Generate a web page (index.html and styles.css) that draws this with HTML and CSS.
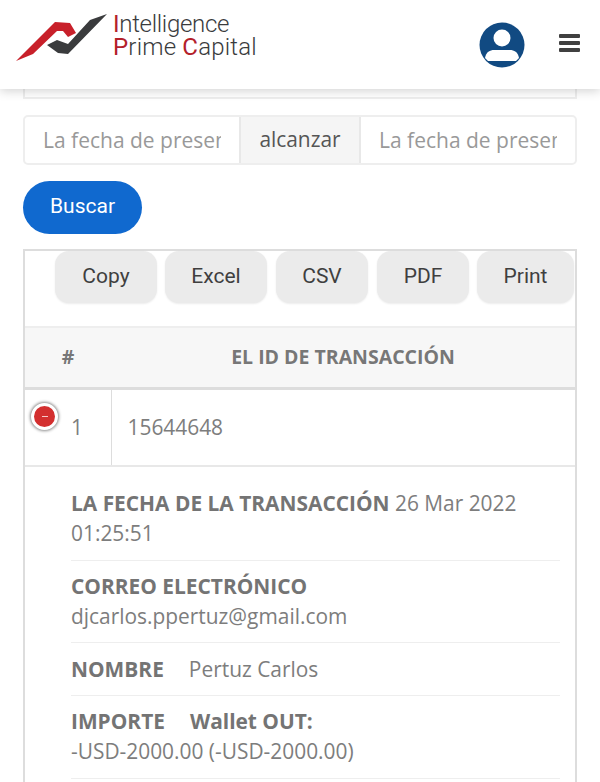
FILE: index.html
```html
<!DOCTYPE html>
<html>
	<head>
		<meta charset="UTF-8">
		<title>Intelligence Prime Capital</title>
		<link rel="stylesheet" href="styles.css">
	</head>
	<body>
		<header class="topbar">
			<a class="logo" href="javascript:;">
				<svg class="logo-mark" width="92" height="48" viewBox="16 14 92 48">
					<polygon fill="#c8202a" points="16,61 55,22 70,23 76,33 68,37 63,31 57,31 33,54"/>
					<polygon fill="#3a3b3d" points="107,14 90,20 68,44 57,40 47,45 58,53 68,54"/>
				</svg>
				<span class="logo-text">
					<span class="line-one"><b>I</b>ntelligence</span>
					<span class="line-two"><b>P</b>rime <b>C</b>apital</span>
				</span>
			</a>
			<svg class="avatar" width="46" height="46" viewBox="0 0 46 46">
				<circle cx="23" cy="23" r="22.5" fill="#114a82"/>
				<circle cx="23" cy="16" r="8.5" fill="#fff"/>
				<path fill="#fff" d="M6 36c1-6 5-8 9-8h16c4 0 8 2 9 8-1 1-2 2-3 3H9c-1-1-2-2-3-3z"/>
			</svg>
			<div class="burger"><i></i><i></i><i></i></div>
		</header>

		<main class="page">
			<div class="prev-box"></div>

			<div class="range">
				<input type="text" placeholder="La fecha de presentación">
				<span>alcanzar</span>
				<input type="text" placeholder="La fecha de presentación">
			</div>

			<button class="search">Buscar</button>

			<section class="panel">
				<div class="tools">
					<button>Copy</button>
					<button>Excel</button>
					<button class="short">CSV</button>
					<button class="short">PDF</button>
					<button class="print">Print</button>
				</div>
				<table class="grid">
					<thead>
						<tr>
							<th class="col-num">#</th>
							<th>EL ID DE TRANSACCIÓN</th>
						</tr>
					</thead>
					<tbody>
						<tr>
							<td class="col-num">
								<span class="toggle"><i></i></span>
								1
							</td>
							<td>15644648</td>
						</tr>
					</tbody>
				</table>
				<ul class="details">
					<li><b>LA FECHA DE LA TRANSACCIÓN</b> 26 Mar 2022 01:25:51</li>
					<li><b>CORREO ELECTRÓNICO</b><br>djcarlos.ppertuz@gmail.com</li>
					<li><b class="label">NOMBRE</b>Pertuz Carlos</li>
					<li><b class="label">IMPORTE</b><b>Wallet OUT:</b><br>-USD-2000.00 (-USD-2000.00)</li>
				</ul>
			</section>
		</main>
	</body>
</html>
```

FILE: styles.css
```css
html,body{
	margin: 0;
	height: 782px;
	overflow: hidden;
	background: #fff;
}
body{
	font-family: "Open Sans", sans-serif;
	font-size: 20.9px;
	line-height: 30px;
	color: #7d7d7d;
}
ul,li{
	margin: 0;
	padding: 0;
	list-style: none;
}
.topbar{
	position: relative;
	z-index: 2;
	height: 89px;
	background: #fff;
	box-shadow: 0 2px 10px rgba(0,0,0,.18);
	display: flex;
	align-items: flex-start;
}
.logo{
	display: flex;
	margin: 14px 0 0 16px;
	text-decoration: none;
	color: #3a3b3d;
}
.logo-mark{
	display: block;
}
.logo-text{
	display: flex;
	flex-direction: column;
	margin: -1px 0 0 5px;
	font: 300 24px/23px "Roboto", sans-serif;
	white-space: nowrap;
}
.logo-text b{
	font-weight: 400;
	color: #b3202a;
}
.line-one{
	letter-spacing: -.3px;
}
.line-two{
	letter-spacing: .2px;
}
.avatar{
	margin: 22px 0 0 auto;
}
.burger{
	width: 21px;
	margin: 34px 20px 0 34px;
	display: flex;
	flex-direction: column;
	gap: 3.5px;
}
.burger i{
	display: block;
	height: 3.5px;
	background: #404040;
	border-radius: 1px;
}
.page{
	padding: 0 23px;
}
.prev-box{
	height: 8px;
	border: 2px solid #eee;
	border-top: 0;
}
.range{
	display: flex;
	height: 50px;
	margin-top: 16px;
	border: 2px solid #eee;
	border-radius: 5px;
	box-sizing: border-box;
}
.range input{
	flex: 1;
	min-width: 0;
	border: 0;
	outline: 0;
	padding: 0 18px 1px;
	background: transparent;
	font: 21px "Open Sans", sans-serif;
}
.range input::placeholder{
	color: #999;
	opacity: 1;
}
.range span{
	width: 118px;
	flex: none;
	background: #f5f5f5;
	border-left: 2px solid #e8e8e8;
	border-right: 2px solid #e8e8e8;
	text-align: center;
	line-height: 45px;
	color: #555;
}
.search{
	display: block;
	width: 119px;
	height: 53px;
	margin-top: 16px;
	padding: 0 0 3px;
	border: 0;
	border-radius: 27px;
	background: #1069cf;
	color: #fff;
	font: 21px "Roboto", sans-serif;
}
.panel{
	margin-top: 15px;
	height: 600px;
	border: 2px solid #ddd;
	border-bottom: 0;
}
.tools{
	display: flex;
	gap: 8px;
	padding-left: 30px;
	height: 75px;
	border-bottom: 2px solid #eee;
}
.tools button{
	flex: none;
	width: 102px;
	height: 52px;
	padding: 0 0 2px;
	border: 0;
	border-radius: 14px;
	background: #ebebeb;
	color: #3f3f3f;
	box-shadow: 0 1px 2px rgba(0,0,0,.08);
	font: 21px "Roboto", sans-serif;
}
.tools .short{
	width: 92px;
	margin-left: 1px;
}
.tools .print{
	width: 97px;
}
.grid{
	width: 100%;
	border-collapse: collapse;
}
.grid th{
	height: 57px;
	padding: 0 0 2px;
	background: #f7f7f7;
	border-bottom: 3px solid #ddd;
	font-size: 19.5px;
	font-weight: 700;
	color: #777;
}
.grid td{
	height: 73px;
	padding: 0 0 2px 16px;
	border-bottom: 2px solid #e8e8e8;
}
.grid .col-num{
	width: 86px;
	box-sizing: border-box;
}
.grid td.col-num{
	position: relative;
	padding-left: 46px;
	border-right: 1px solid #ddd;
}
.toggle{
	position: absolute;
	left: 6px;
	top: 13px;
	width: 21px;
	height: 21px;
	border: 3px solid #fff;
	border-radius: 50%;
	background: #d32f2f;
	box-shadow: 0 0 3px 1px rgba(0,0,0,.45);
	display: flex;
	align-items: center;
	justify-content: center;
}
.toggle i{
	width: 6px;
	height: 1px;
	background: #f7c9c9;
}
.details{
	padding: 21px 15px 0 46px;
}
.details li{
	padding: 0 0 11.5px;
	margin-bottom: 10.25px;
	border-bottom: 1px solid #eee;
}
.details b{
	font-weight: 700;
	color: #747474;
}
.details .label{
	margin-right: 25px;
}
```
